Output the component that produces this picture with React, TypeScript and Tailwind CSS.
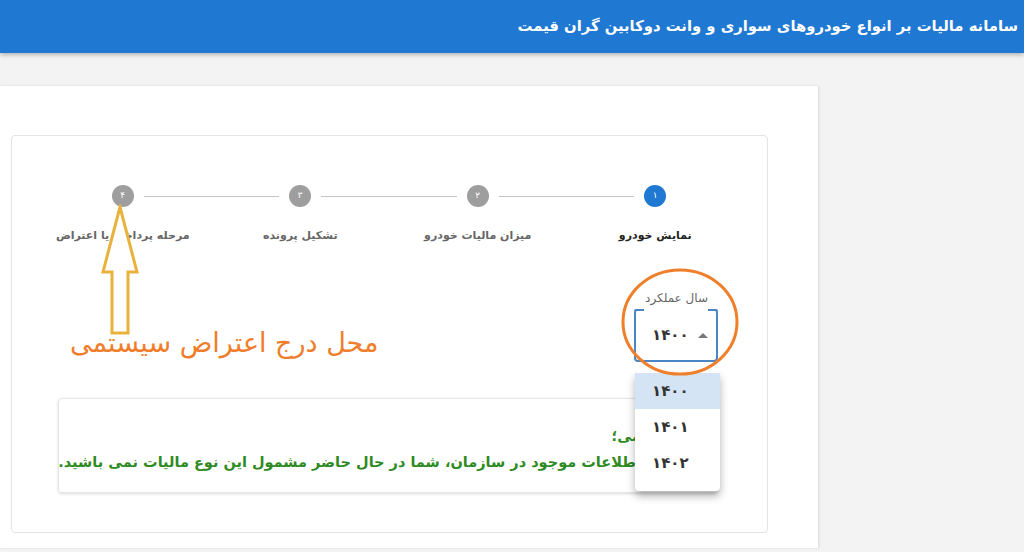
import React from "react";

const steps = [
  { n: "۱", label: "نمایش خودرو", active: true },
  { n: "۲", label: "میزان مالیات خودرو", active: false },
  { n: "۳", label: "تشکیل پرونده", active: false },
  { n: "۴", label: "مرحله پرداخت یا اعتراض", active: false },
];

const years = ["۱۴۰۰", "۱۴۰۱", "۱۴۰۲"];

const App = () => {
  return (
    <div
      dir="rtl"
      className="relative w-[1024px] h-[552px] overflow-hidden bg-[#f3f3f3] font-['DejaVu_Sans',sans-serif]"
    >
      {/* header */}
      <header className="relative z-10 h-[53px] bg-[#1f78d1] flex items-center pr-[6px] shadow-[0_2px_4px_rgba(0,0,0,0.25)]">
        <h1 className="text-white text-[14.8px] font-bold">
          سامانه مالیات بر انواع خودروهای سواری و وانت دوکابین گران قیمت
        </h1>
      </header>

      {/* page card */}
      <main className="pt-[33px]">
        <div className="w-[818px] mr-[206px] h-[462px] bg-white pt-[49px] pr-[50px] pl-[11px] pb-[15px] shadow-[1px_0_2px_rgba(0,0,0,0.12)]">
          <div className="h-[398px] border border-[#e4e4e4] rounded-[4px] bg-white">
            {/* stepper */}
            <div className="grid grid-cols-4 pt-[49px] pr-[23px] pl-[22px]">
              {steps.map((s, i) => (
                <div key={s.n} className="relative flex flex-col items-center">
                  {i > 0 && (
                    <div className="absolute top-[11px] left-[calc(50%+21px)] right-[calc(-50%+21px)] h-px bg-[#c4c4c4]" />
                  )}
                  <div
                    className={
                      s.active
                        ? "w-[22px] h-[22px] rounded-full bg-[#1f78d1] text-white text-[9px] flex items-center justify-center"
                        : "w-[22px] h-[22px] rounded-full bg-[#9e9e9e] text-white text-[9px] flex items-center justify-center"
                    }
                  >
                    {s.n}
                  </div>
                  <div
                    className={
                      s.active
                        ? "mt-[21px] text-[11px] leading-4 font-bold text-[#222]"
                        : "mt-[21px] text-[11px] leading-4 font-bold text-[#666]"
                    }
                  >
                    {s.label}
                  </div>
                </div>
              ))}
            </div>

            {/* year select */}
            <div className="flex pr-[49px] mt-[45px]">
              <div className="w-[84px] flex flex-col">
                <label className="text-[12px] leading-[18px] text-[#666] pr-[10px]">سال عملکرد</label>
                <div
                  dir="ltr"
                  className="relative mt-[2px] h-[53px] rounded-[4px] border-2 border-[#4a86c5] border-t-transparent flex items-center pl-[16px] gap-[9px]"
                >
                  <span className="absolute -top-[2px] left-[-2px] w-[10px] h-[2px] bg-[#4a86c5] rounded-tl-[4px]" />
                  <span className="absolute -top-[2px] right-[-2px] w-[10px] h-[2px] bg-[#4a86c5] rounded-tr-[4px]" />
                  <span className="text-[15px] font-bold text-[#333]">۱۴۰۰</span>
                  <span className="w-0 h-0 border-l-[5px] border-r-[5px] border-b-[5px] border-l-transparent border-r-transparent border-b-[#777]" />
                </div>
              </div>
            </div>

            {/* message */}
            <div className="mt-[36px] mr-[49px] ml-[46px] h-[95px] rounded-[4px] border border-[#e6e6e6] shadow-[0_1px_3px_rgba(0,0,0,0.15)] pt-[24px] pr-[12px] text-[14.5px] leading-[26px] font-bold text-[#2e8b23]">
              <p>کاربر گرامی؛</p>
              <p className="whitespace-nowrap">
                براساس اطلاعات موجود در سازمان، شما در حال حاضر مشمول این نوع مالیات نمی باشید.
              </p>
            </div>
          </div>
        </div>
      </main>

      {/* open select menu */}
      <ul
        dir="ltr"
        className="absolute left-[635px] top-[372px] w-[85px] h-[119px] bg-white rounded-[4px] shadow-[0_5px_8px_rgba(0,0,0,0.3)] pt-[1px]"
      >
        {years.map((y, i) => (
          <li
            key={y}
            className={
              i === 0
                ? "h-[36px] flex items-center pl-[17px] bg-[#d4e4f4] text-[15px] font-bold text-[#333]"
                : "h-[36px] flex items-center pl-[17px] text-[15px] font-bold text-[#333]"
            }
          >
            {y}
          </li>
        ))}
      </ul>

      {/* annotation: circle around select */}
      <svg className="absolute left-[620px] top-[267px]" width="120" height="112" viewBox="0 0 120 112">
        <ellipse cx="60" cy="55" rx="57" ry="52" fill="none" stroke="#ef7f2a" strokeWidth="3" />
      </svg>

      {/* annotation: arrow */}
      <svg className="absolute left-[100px] top-[204px]" width="40" height="132" viewBox="0 0 40 132">
        <polygon
          points="20,3 37,68 28,68 28,129 12,129 12,68 3,68"
          fill="white"
          stroke="#e9b23c"
          strokeWidth="3"
          strokeLinejoin="miter"
        />
      </svg>

      <div className="absolute left-[70px] top-[325px] text-[27px] leading-[36px] text-[#ef7e2c]">
        محل درج اعتراض سیستمی
      </div>
    </div>
  );
};

export default App;
